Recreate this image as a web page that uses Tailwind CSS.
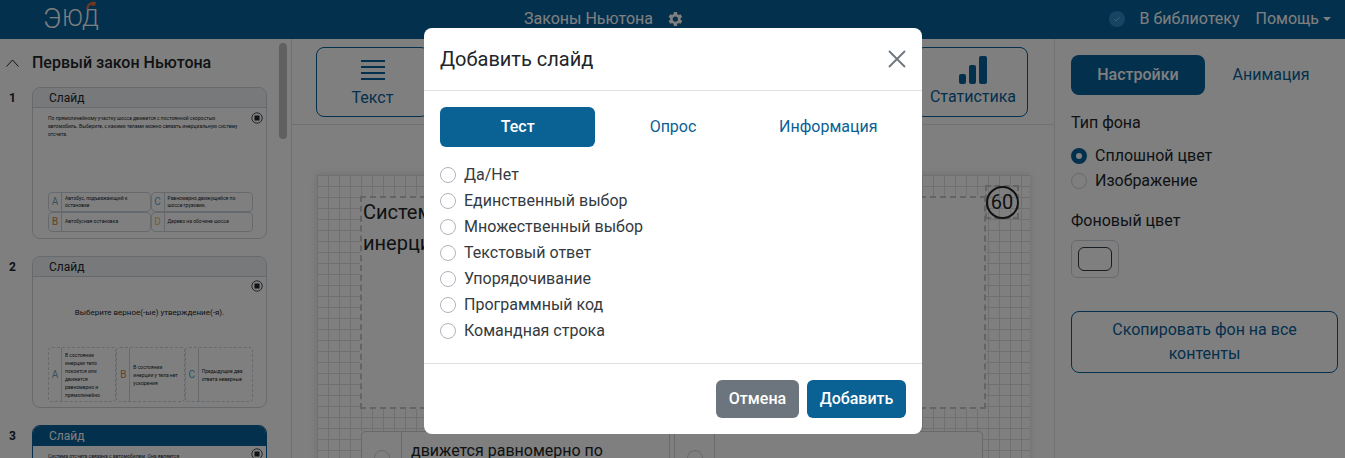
<!DOCTYPE html>
<html lang="ru">
<head>
  <meta charset="UTF-8">
  <meta name="viewport" content="width=device-width, initial-scale=1.0">
  <title>Законы Ньютона</title>
  <script src="https://cdn.jsdelivr.net/npm/@tailwindcss/browser@4"></script>
</head>
<body class="bg-white font-['Roboto',sans-serif] text-[#212529]">
  <div class="relative h-[458px] w-[1345px] overflow-hidden">

    <!-- top bar -->
    <header class="flex h-[39px] items-center bg-[#07619b] pb-[2px] text-white">
      <div class="relative ml-[43px] flex w-[54px] items-center text-[23px] font-light leading-none tracking-[-0.5px] text-white">
        <span class="text-[28px] leading-none">Э</span><span class="ml-[1px]">ЮД</span>
        <svg class="absolute -top-[4px] right-0" width="12" height="9" viewBox="0 0 12 9"><path d="M1 8 C2 2 6 0 11 1 L10 5 L5 4 L3 8 Z" fill="#e0703c"/></svg>
      </div>
      <div class="ml-[427px] flex items-center gap-[13px] text-base">
        <span>Законы Ньютона</span>
        <svg width="18" height="18" viewBox="0 0 24 24" fill="white"><path d="M19.4 13a7.6 7.6 0 0 0 0-2l2.2-1.7-2.2-3.7-2.6 1a7.6 7.6 0 0 0-1.7-1L14.7 2.8h-4.3L10 5.6a7.6 7.6 0 0 0-1.7 1l-2.6-1-2.2 3.7L5.6 11a7.6 7.6 0 0 0 0 2l-2.1 1.7 2.2 3.7 2.6-1a7.6 7.6 0 0 0 1.7 1l.4 2.8h4.3l.4-2.8a7.6 7.6 0 0 0 1.7-1l2.6 1 2.2-3.7zM12.5 15.5a3.5 3.5 0 1 1 0-7 3.5 3.5 0 0 1 0 7z"/></svg>
      </div>
      <div class="ml-auto flex items-center pr-[14px] text-base">
        <svg class="mr-[15px]" width="16" height="16" viewBox="0 0 16 16"><circle cx="8" cy="8" r="8" fill="#2b8ac6"/><path d="M5 8l2 2 4-4" fill="none" stroke="#7db8dd" stroke-width="1"/></svg>
        <span>В библиотеку</span>
        <span class="ml-4">Помощь</span>
        <span class="ml-[4px] h-0 w-0 border-x-[4px] border-t-[4px] border-x-transparent border-t-white"></span>
      </div>
    </header>

    <div class="flex h-[419px]">
      <!-- slide list -->
      <aside class="relative w-[292px] shrink-0 overflow-hidden border-r border-[#dee2e6]">
        <div class="flex h-[48px] items-center">
          <svg class="ml-[6px]" width="13" height="8" viewBox="0 0 13 8" fill="none" stroke="#212529" stroke-width="1"><path d="M0.5 7.5 L6.5 1 L12.5 7.5"/></svg>
          <span class="ml-[13px] text-base font-medium">Первый закон Ньютона</span>
        </div>
        <div class="absolute left-[279px] top-[4px] h-[96px] w-2 rounded bg-[#c1c1c1]"></div>

        <div class="flex flex-col gap-[17px]">
          <div class="flex">
            <span class="w-[32px] pl-[9px] pt-[3px] text-xs font-bold">1</span>
            <div class="h-[152px] w-[235px] overflow-hidden rounded-lg border border-[#ced4da]">
              <div class="flex h-[20px] items-center border-b border-[#ced4da] bg-[#f1f3f5] pl-4 text-xs">Слайд</div>
              <div class="relative px-[15px] pt-[6px]">
                <svg class="absolute right-[3px] top-[4px]" width="12" height="12" viewBox="0 0 12 12"><circle cx="6" cy="6" r="5.2" fill="none" stroke="#495057" stroke-width="1"/><rect x="3.5" y="3.5" width="5" height="5" fill="#212529"/></svg>
                <p class="whitespace-nowrap text-[5px] leading-[8px]">По прямолинейному участку шоссе движется с постоянной скоростью<br>автомобиль. Выберите, с какими телами можно связать инерциальную систему<br>отсчета.</p>
                <div class="mt-[54px] grid w-[205px] grid-cols-2 text-[5px] leading-[7.5px]">
                  <div class="flex h-5 rounded-sm border border-[#ced4da]"><span class="flex w-[13px] shrink-0 items-center justify-center border-r border-[#ced4da] text-[10px] text-[#7a9fb5]">A</span><span class="flex items-center pl-[3px] pr-[10px]">Автобус, подъезжающий к остановке</span></div>
                  <div class="flex h-5 rounded-sm border border-[#ced4da]"><span class="flex w-[13px] shrink-0 items-center justify-center border-r border-[#ced4da] text-[10px] text-[#5ba3d0]">C</span><span class="flex items-center pl-[3px] pr-[10px]">Равномерно движущийся по шоссе грузовик.</span></div>
                  <div class="flex h-5 rounded-sm border border-[#ced4da]"><span class="flex w-[13px] shrink-0 items-center justify-center border-r border-[#ced4da] text-[10px] text-[#d0823c]">B</span><span class="flex items-center pl-[3px]">Автобусная остановка</span></div>
                  <div class="flex h-5 rounded-sm border border-[#ced4da]"><span class="flex w-[13px] shrink-0 items-center justify-center border-r border-[#ced4da] text-[10px] text-[#e8c070]">D</span><span class="flex items-center pl-[3px]">Дерево на обочине шоссе</span></div>
                </div>
              </div>
            </div>
          </div>

          <div class="flex">
            <span class="w-[32px] pl-[9px] pt-[3px] text-xs font-bold">2</span>
            <div class="h-[152px] w-[235px] overflow-hidden rounded-lg border border-[#ced4da]">
              <div class="flex h-[20px] items-center border-b border-[#ced4da] bg-[#f1f3f5] pl-4 text-xs">Слайд</div>
              <div class="relative px-[15px]">
                <svg class="absolute right-[3px] top-[3px]" width="12" height="12" viewBox="0 0 12 12"><circle cx="6" cy="6" r="5.2" fill="none" stroke="#495057" stroke-width="1"/><rect x="3.5" y="3.5" width="5" height="5" fill="#212529"/></svg>
                <p class="pt-[30px] text-center text-[8px] leading-[12px]">Выберите верное(-ые) утверждение(-я).</p>
                <div class="mt-[28px] grid h-[55px] w-[205px] grid-cols-3 text-[5px] leading-[8px]">
                  <div class="flex rounded-sm border border-dashed border-[#ced4da]"><span class="flex w-[13px] shrink-0 items-center justify-center border-r border-[#ced4da] text-[10px] text-[#7a9fb5]">A</span><span class="flex items-center whitespace-nowrap pl-[3px]"><span>В состоянии<br>инерции тело<br>покоится или<br>движется<br>равномерно и<br>прямолинейно</span></span></div>
                  <div class="flex rounded-sm border border-dashed border-[#ced4da]"><span class="flex w-[13px] shrink-0 items-center justify-center border-r border-[#ced4da] text-[10px] text-[#d0823c]">B</span><span class="flex items-center whitespace-nowrap pl-[3px]"><span>В состоянии<br>инерции у тела нет<br>ускорения</span></span></div>
                  <div class="flex rounded-sm border border-dashed border-[#ced4da]"><span class="flex w-[13px] shrink-0 items-center justify-center border-r border-[#ced4da] text-[10px] text-[#5ba3d0]">C</span><span class="flex items-center whitespace-nowrap pl-[3px]"><span>Предыдущие два<br>ответа неверные</span></span></div>
                </div>
              </div>
            </div>
          </div>

          <div class="flex">
            <span class="w-[32px] pl-[9px] pt-[3px] text-xs font-bold">3</span>
            <div class="h-[152px] w-[235px] overflow-hidden rounded-lg border border-[#07619b]">
              <div class="flex h-[20px] items-center bg-[#07619b] pl-4 text-xs text-white">Слайд</div>
              <div class="relative px-[15px] pt-[6px]">
                <svg class="absolute right-[3px] top-[2px]" width="12" height="12" viewBox="0 0 12 12"><circle cx="6" cy="6" r="5.2" fill="none" stroke="#495057" stroke-width="1"/><rect x="3.5" y="3.5" width="5" height="5" fill="#212529"/></svg>
                <p class="w-[200px] text-[5px] leading-[8px]">Система отсчета связана с автомобилем. Она является</p>
              </div>
            </div>
          </div>
        </div>
      </aside>

      <!-- editor -->
      <main class="w-[762px] shrink-0 overflow-hidden">
        <div class="flex h-[86px] justify-between border-b border-[#dee2e6] pl-[24px] pr-[26px] pt-[8px]">
          <button class="flex h-[70px] w-[113px] flex-col items-center rounded-lg border border-[#07619b] pt-[12px] text-base text-[#07619b]">
            <svg width="24" height="21" viewBox="0 0 24 21" fill="#07619b"><rect y="0" width="24" height="2"/><rect y="6" width="24" height="2"/><rect y="12" width="24" height="2"/><rect y="18" width="24" height="2"/></svg>
            <span class="mt-[5px]">Текст</span>
          </button>
          <button class="flex h-[70px] w-[112px] flex-col items-center rounded-lg border border-[#07619b] pl-[2px] pt-[8px] text-base text-[#07619b]">
            <svg width="28" height="28" viewBox="0 0 28 28" fill="#07619b"><rect x="0" y="18" width="7" height="10" rx="2"/><rect x="10" y="9" width="7" height="19" rx="2"/><rect x="20" y="0" width="8" height="28" rx="2"/></svg>
            <span class="mt-[1px]">Статистика</span>
          </button>
        </div>
        <div class="flex pl-[25px] pt-[50px]">
          <div class="relative h-[400px] w-[713px] bg-white bg-[linear-gradient(to_right,#e0e0e0_1px,transparent_1px),linear-gradient(#e0e0e0_1px,transparent_1px)] bg-[size:11px_11px] px-[43px] pt-[21px] shadow-[0_0_8px_rgba(0,0,0,0.15)]">
            <div class="h-[213px] w-[626px] border-2 border-dashed border-[#c8c8c8] bg-white pl-[1px] text-[20px] leading-[31px]">
              <p class="-mt-[1px]">Система отсчета связана с автомобилем. Она является<br>инерциальной</p>
            </div>
            <div class="absolute left-[668px] top-[10px] flex h-[34px] w-[34px] items-center justify-center border-2 border-dashed border-[#c8c8c8]">
              <span class="flex h-[33px] w-[33px] shrink-0 items-center justify-center rounded-full border-2 border-[#212529] text-[20px]">60</span>
            </div>
            <div class="ml-[1px] mt-[22px] grid h-[50px] w-[622px] grid-cols-2 gap-[4px] bg-white">
              <div class="flex rounded-sm border border-[#ced4da]"><span class="flex w-[40px] shrink-0 justify-center border-r border-[#ced4da] pt-[18px]"><span class="h-4 w-4 rounded-full border border-[#ced4da]"></span></span><span class="pl-[9px] pt-[7px] text-base">движется равномерно по</span></div>
              <div class="flex rounded-sm border border-[#ced4da]"><span class="flex w-[40px] shrink-0 justify-center border-r border-[#ced4da] pt-[18px]"><span class="h-4 w-4 rounded-full border border-[#ced4da]"></span></span></div>
            </div>
          </div>
        </div>
      </main>

      <!-- settings -->
      <aside class="flex-1 border-l border-[#dee2e6] pl-[16px] pr-[7px] pt-[16px]">
        <div class="flex items-center text-base">
          <button class="h-10 w-[134px] rounded-lg bg-[#07619b] font-medium text-white">Настройки</button>
          <button class="h-10 w-[132px] text-[#07619b]">Анимация</button>
        </div>
        <p class="mt-[18px] text-base leading-5">Тип фона</p>
        <div class="mt-[10px] flex h-[25px] items-center gap-2">
          <span class="h-4 w-4 rounded-full border-[5px] border-[#07619b] bg-white"></span>
          <span class="text-base">Сплошной цвет</span>
        </div>
        <div class="flex h-[25px] items-center gap-2">
          <span class="h-4 w-4 rounded-full border border-[#ced4da]"></span>
          <span class="text-base">Изображение</span>
        </div>
        <p class="mt-[18px] text-base leading-5">Фоновый цвет</p>
        <div class="mt-[9px] flex h-[38px] w-[48px] items-center justify-center rounded-md border border-[#ced4da]">
          <span class="h-6 w-[34px] rounded-md border border-[#343a40] bg-white"></span>
        </div>
        <button class="mt-[33px] h-[62px] w-[267px] rounded-lg border border-[#07619b] text-base leading-6 text-[#07619b]">Скопировать фон на все<br>контенты</button>
      </aside>
    </div>

    <!-- add slide dialog -->
    <div class="absolute inset-0 bg-black/50"></div>
    <div class="absolute left-[424px] top-[28px] flex h-[406px] w-[498px] flex-col rounded-lg bg-white">
      <div class="flex h-[63px] items-center justify-between border-b border-[#dee2e6] pl-4 pr-[16px]">
        <h2 class="text-xl text-[#212529]">Добавить слайд</h2>
        <svg width="18" height="18" viewBox="0 0 18 18" fill="none" stroke="#6c757d" stroke-width="1.8"><path d="M1 1 L17 17 M17 1 L1 17"/></svg>
      </div>
      <div class="flex-1 px-4 pt-4">
        <div class="grid grid-cols-3 text-base">
          <button class="h-10 rounded-md bg-[#0a6194] font-medium text-white">Тест</button>
          <button class="h-10 text-[#0a6194]">Опрос</button>
          <button class="h-10 text-[#0a6194]">Информация</button>
        </div>
        <ul class="mt-[15px] flex flex-col text-base text-[#343a40]">
          <li class="flex h-[26px] items-center gap-2"><span class="h-4 w-4 rounded-full border border-[#adb5bd]"></span>Да/Нет</li>
          <li class="flex h-[26px] items-center gap-2"><span class="h-4 w-4 rounded-full border border-[#adb5bd]"></span>Единственный выбор</li>
          <li class="flex h-[26px] items-center gap-2"><span class="h-4 w-4 rounded-full border border-[#adb5bd]"></span>Множественный выбор</li>
          <li class="flex h-[26px] items-center gap-2"><span class="h-4 w-4 rounded-full border border-[#adb5bd]"></span>Текстовый ответ</li>
          <li class="flex h-[26px] items-center gap-2"><span class="h-4 w-4 rounded-full border border-[#adb5bd]"></span>Упорядочивание</li>
          <li class="flex h-[26px] items-center gap-2"><span class="h-4 w-4 rounded-full border border-[#adb5bd]"></span>Программный код</li>
          <li class="flex h-[26px] items-center gap-2"><span class="h-4 w-4 rounded-full border border-[#adb5bd]"></span>Командная строка</li>
        </ul>
      </div>
      <div class="flex h-[71px] items-start justify-end gap-2 border-t border-[#dee2e6] px-4 pt-4">
        <button class="h-[38px] w-[83px] rounded-md bg-[#6c757d] text-base font-medium text-white">Отмена</button>
        <button class="h-[38px] w-[99px] rounded-md bg-[#0a6194] text-base font-medium text-white">Добавить</button>
      </div>
    </div>
  </div>
</body>
</html>
